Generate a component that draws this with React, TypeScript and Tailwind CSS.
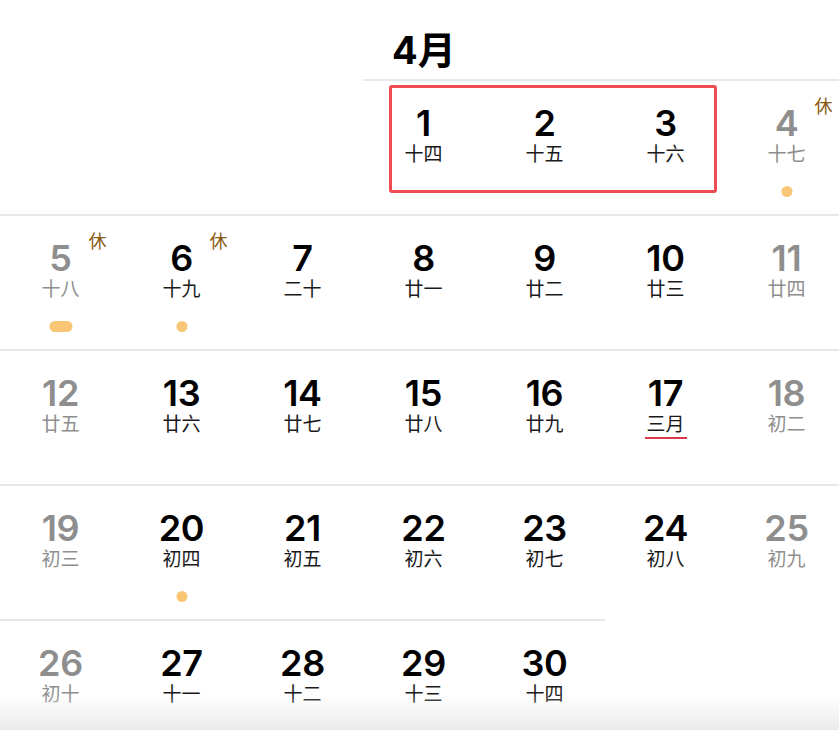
const LUNAR: Record<number, string> = {
  1: '十四', 2: '十五', 3: '十六', 4: '十七', 5: '十八', 6: '十九', 7: '二十',
  8: '廿一', 9: '廿二', 10: '廿三', 11: '廿四', 12: '廿五', 13: '廿六', 14: '廿七',
  15: '廿八', 16: '廿九', 17: '三月', 18: '初二', 19: '初三', 20: '初四', 21: '初五',
  22: '初六', 23: '初七', 24: '初八', 25: '初九', 26: '初十', 27: '十一', 28: '十二',
  29: '十三', 30: '十四',
}

const WEEKS: (number | null)[][] = [
  [null, null, null, 1, 2, 3, 4],
  [5, 6, 7, 8, 9, 10, 11],
  [12, 13, 14, 15, 16, 17, 18],
  [19, 20, 21, 22, 23, 24, 25],
  [26, 27, 28, 29, 30, null, null],
]

const HOLIDAY = [4, 5, 6]
const DOTS: Record<number, 'dot' | 'pill'> = { 4: 'dot', 5: 'pill', 6: 'dot', 20: 'dot' }
const TODAY = 17

function DayCell({ day, weekend }: { day: number | null; weekend: boolean }) {
  if (day === null) return <div className="h-[135px]" />
  const mark = DOTS[day]
  return (
    <div className="relative h-[135px] border-t-2 border-[#e8e8e8] flex flex-col items-center pt-[26px]">
      <div
        className={`text-[36px] leading-[32px] font-semibold tracking-[-0.3px] ${weekend ? 'text-[#8e8e8e]' : 'text-black'}`}
        style={{ fontFamily: 'Inter, "Liberation Sans", sans-serif' }}
      >
        {day}
      </div>
      <div
        className={`mt-[3px] text-[19px] leading-[22px] ${weekend ? 'text-[#8e8e8e]' : 'text-[#1a1a1a]'}`}
        style={{ fontFamily: '"Noto Sans CJK SC", sans-serif' }}
      >
        {LUNAR[day]}
      </div>
      {day === TODAY && <div className="mt-[3px] h-[2px] w-[42px] bg-[#d93a4a]" />}
      {mark && (
        <div
          className={`absolute top-[105px] left-1/2 -translate-x-1/2 h-[11px] rounded-full bg-[#f9c676] ${mark === 'pill' ? 'w-[23px]' : 'w-[11px]'}`}
        />
      )}
      {HOLIDAY.includes(day) && (
        <span
          className="absolute top-[14px] left-[calc(50%+28px)] text-[18px] leading-[20px] text-[#8a5a12]"
          style={{ fontFamily: '"Noto Sans CJK SC", sans-serif' }}
        >
          休
        </span>
      )}
    </div>
  )
}

export default function App() {
  return (
    <div className="relative h-[730px] w-[839px] overflow-hidden bg-white">
      <div className="w-[847px]">
        <div className="grid grid-cols-[repeat(7,121px)] h-[79px]">
          <div className="col-start-4 col-span-2 flex items-end pb-[6px] pl-[29px]">
            <h1
              className="text-[38px] leading-[46px] font-bold text-black"
              style={{ fontFamily: 'Inter, "Noto Sans CJK SC", sans-serif' }}
            >
              4月
            </h1>
          </div>
        </div>
        {WEEKS.map((week, i) => (
          <div key={i} className="grid grid-cols-[repeat(7,121px)]">
            {week.map((day, j) => (
              <DayCell key={j} day={day} weekend={j === 0 || j === 6} />
            ))}
          </div>
        ))}
      </div>

      {/* highlight box */}
      <div className="absolute left-[389px] top-[85px] w-[328px] h-[108px] border-[3px] border-[#ee4d55] rounded-[3px]" />

      {/* bottom fade */}
      <div className="absolute bottom-0 left-0 right-0 h-[36px] bg-gradient-to-b from-white/0 to-[#ebebeb]" />
    </div>
  )
}
